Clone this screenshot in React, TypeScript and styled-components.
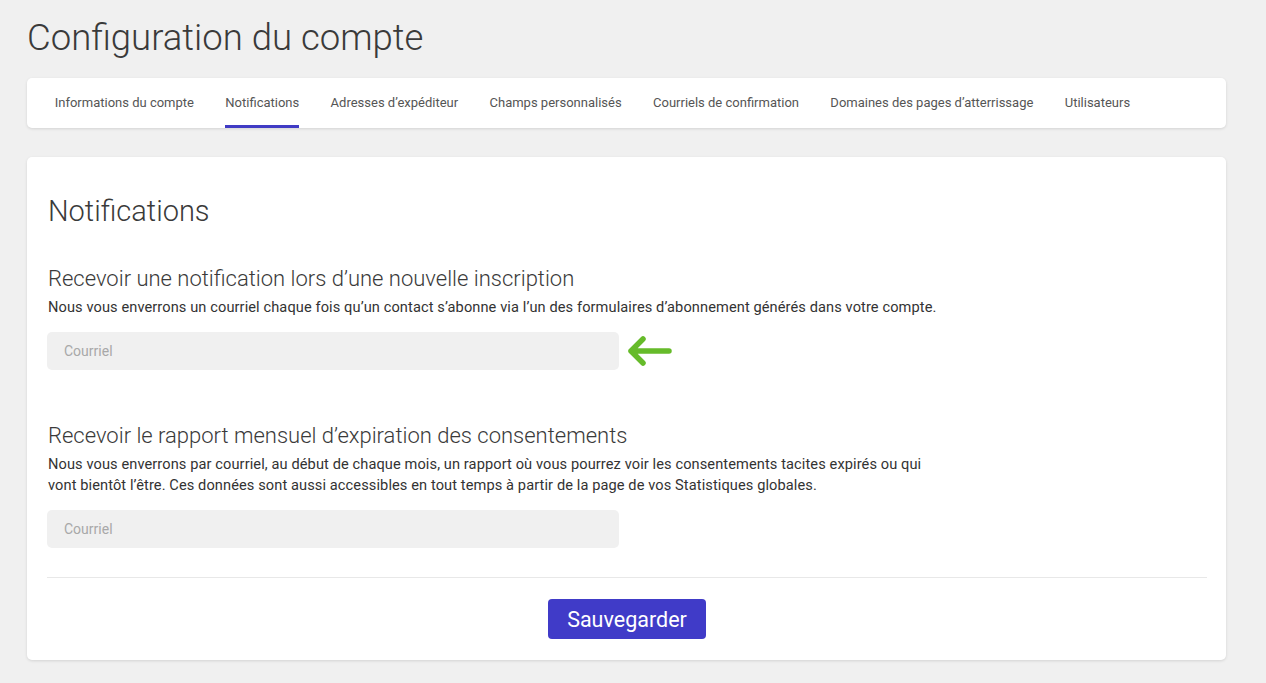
import styled, { createGlobalStyle } from "styled-components";

const GlobalStyle = createGlobalStyle`
  html, body {
    margin: 0;
    padding: 0;
    background: #f0f0f0;
    font-family: Roboto, "Liberation Sans", sans-serif;
    color: #333;
  }
`;

const tabs = [
  "Informations du compte",
  "Notifications",
  "Adresses d’expéditeur",
  "Champs personnalisés",
  "Courriels de confirmation",
  "Domaines des pages d’atterrissage",
  "Utilisateurs",
];

function GreenArrow() {
  return (
    <svg width="50" height="36" viewBox="0 0 50 36">
      <path
        d="M44 18 H6 M18 6 L6 18 L18 30"
        fill="none"
        stroke="#66bb2a"
        strokeWidth="5.5"
        strokeLinecap="round"
        strokeLinejoin="round"
      />
    </svg>
  );
}

export default function App() {
  return (
    <Page>
      <GlobalStyle />
      <PageTitle>Configuration du compte</PageTitle>
      <TabBar>
        {tabs.map((t) => (
          <Tab key={t} active={t === "Notifications"}>
            {t}
          </Tab>
        ))}
      </TabBar>
      <Card>
        <CardTitle>Notifications</CardTitle>
        <Section>
          <SectionTitle>Recevoir une notification lors d’une nouvelle inscription</SectionTitle>
          <Description>
            Nous vous enverrons un courriel chaque fois qu’un contact s’abonne via l’un des
            formulaires d’abonnement générés dans votre compte.
          </Description>
          <FieldRow>
            <EmailInput placeholder="Courriel" />
            <GreenArrow />
          </FieldRow>
        </Section>
        <Section>
          <SectionTitle>Recevoir le rapport mensuel d’expiration des consentements</SectionTitle>
          <Description narrow>
            Nous vous enverrons par courriel, au début de chaque mois, un rapport où vous pourrez
            voir les consentements tacites expirés ou qui vont bientôt l’être. Ces données sont
            aussi accessibles en tout temps à partir de la page de vos Statistiques globales.
          </Description>
          <FieldRow>
            <EmailInput placeholder="Courriel" />
          </FieldRow>
        </Section>
        <Footer>
          <SaveButton>Sauvegarder</SaveButton>
        </Footer>
      </Card>
    </Page>
  );
}

const Page = styled.div`
  padding: 14px 40px 22px 27px;
`;

const PageTitle = styled.h1`
  margin: 0 0 16px 0;
  font-size: 36.5px;
  line-height: 48px;
  font-weight: 300;
  color: #3a3a3a;
`;

const TabBar = styled.nav`
  display: flex;
  height: 50px;
  padding: 0 12px;
  background: #fff;
  border-radius: 5px;
  box-shadow: 0 1px 3px rgba(0, 0, 0, 0.12);
`;

const Tab = styled.div<{ active?: boolean }>`
  display: flex;
  align-items: center;
  margin: 0 15.7px;
  font-size: 13px;
  color: #555;
  border-bottom: 3px solid ${(p) => (p.active ? "#403bc4" : "transparent")};
  padding-top: 2px;
  cursor: pointer;
`;

const Card = styled.section`
  margin-top: 29px;
  padding: 34px 19px 21px 20px;
  background: #fff;
  border-radius: 5px;
  box-shadow: 0 1px 3px rgba(0, 0, 0, 0.12);
`;

const CardTitle = styled.h2`
  margin: 0 0 33px 1px;
  font-size: 29px;
  line-height: 40px;
  font-weight: 300;
  color: #3a3a3a;
`;

const Section = styled.div`
  margin-bottom: 29px;
  & + & {
    margin-top: 51px;
  }
`;

const SectionTitle = styled.h3`
  margin: 0 0 3px 1px;
  font-size: 22px;
  line-height: 30px;
  font-weight: 300;
  color: #3a3a3a;
`;

const Description = styled.p<{ narrow?: boolean }>`
  margin: 0 0 14px 1px;
  max-width: ${(p) => (p.narrow ? "885px" : "none")};
  font-size: 14.6px;
  letter-spacing: 0.1px;
  line-height: 21px;
  color: #333;
`;

const FieldRow = styled.div`
  display: flex;
  align-items: center;
  gap: 6px;
`;

const EmailInput = styled.input`
  width: 572px;
  height: 38px;
  box-sizing: border-box;
  padding: 0 17px;
  border: none;
  border-radius: 5px;
  background: #f0f0f0;
  font-family: Roboto, "Liberation Sans", sans-serif;
  font-size: 14px;
  color: #333;
  outline: none;
  &::placeholder {
    color: #a8a8a8;
  }
`;

const Footer = styled.div`
  display: flex;
  justify-content: center;
  border-top: 1px solid #e8e8e8;
  padding-top: 21px;
`;

const SaveButton = styled.button`
  width: 158px;
  height: 40px;
  border: none;
  border-radius: 4px;
  background: #403bc8;
  color: #fff;
  font-family: Roboto, "Liberation Sans", sans-serif;
  font-size: 21.5px;
  font-weight: 400;
  cursor: pointer;
`;
